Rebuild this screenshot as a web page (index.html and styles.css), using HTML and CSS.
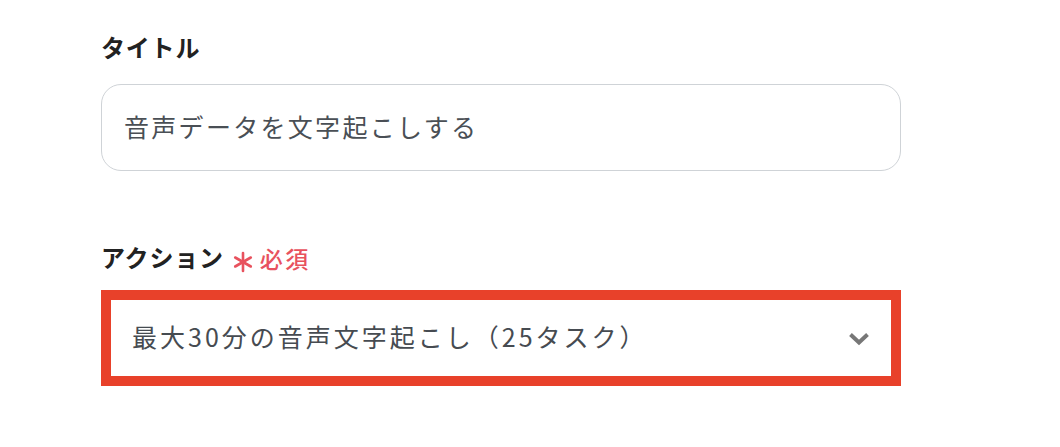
FILE: index.html
```html
<!DOCTYPE html>
<html lang="ja">
<head>
<meta charset="utf-8">
<link rel="stylesheet" href="styles.css">
</head>
<body>
<div class="form">
  <div class="field field-title">
    <div class="label">タイトル</div>
    <div class="input">音声データを文字起こしする</div>
  </div>
  <div class="field field-action">
    <div class="label">アクション<span class="req"><svg class="star" width="20" height="22" viewBox="0 0 20 22"><g stroke="#e8525e" stroke-width="2.6" stroke-linecap="round"><path d="M10 2 V20"/><path d="M2.2 6.5 L17.8 15.5"/><path d="M2.2 15.5 L17.8 6.5"/></g></svg><span class="req-text">必須</span></span></div>
    <div class="select">
      <span class="select-text">最大30分の音声文字起こし（25タスク）</span>
      <svg class="chev" width="22" height="14" viewBox="0 0 22 14"><path d="M2.5 2.5 L11 10.5 L19.5 2.5" fill="none" stroke="#777" stroke-width="4"/></svg>
    </div>
  </div>
</div>
</body>
</html>
```

FILE: styles.css
```css
html, body {
  margin: 0;
  padding: 0;
  background: #fff;
}
body {
  font-family: "Noto Sans CJK JP", "Noto Sans", sans-serif;
  width: 1060px;
  height: 447px;
  overflow: hidden;
}
.form {
  padding: 29px 0 0 101px;
  width: 800px;
  display: flex;
  flex-direction: column;
}
.label {
  font-size: 24px;
  line-height: 36px;
  height: 36px;
  font-weight: 700;
  color: #222;
  display: flex;
  align-items: center;
  letter-spacing: 0.8px;
}
.req {
  display: inline-flex;
  align-items: center;
  color: #e8525e;
  margin-left: 9px;
}
.star {
  display: block;
  margin-top: 9px;
}
.req-text {
  font-size: 23px;
  font-weight: 500;
  margin-left: 7px;
  letter-spacing: 2.5px;
  margin-top: 2px;
}
.input {
  margin-top: 19px;
  border: 1.5px solid #cfd3d7;
  border-radius: 20px;
  box-sizing: border-box;
  height: 87px;
  padding: 0 0 4px 22px;
  display: flex;
  align-items: center;
  font-size: 25px;
  letter-spacing: 2.3px;
  color: #4a4f55;
}
.field-action {
  margin-top: 68px;
}
.select {
  margin-top: 15px;
  height: 96px;
  box-sizing: border-box;
  border: 10px solid #e8412a;
  display: flex;
  align-items: center;
  justify-content: space-between;
  padding: 0 21px 0 21px;
}
.select-text {
  font-size: 25px;
  letter-spacing: 3px;
  color: #464b51;
  margin-bottom: 4px;
}
.chev {
  display: block;
  margin-top: 2px;
}
```
